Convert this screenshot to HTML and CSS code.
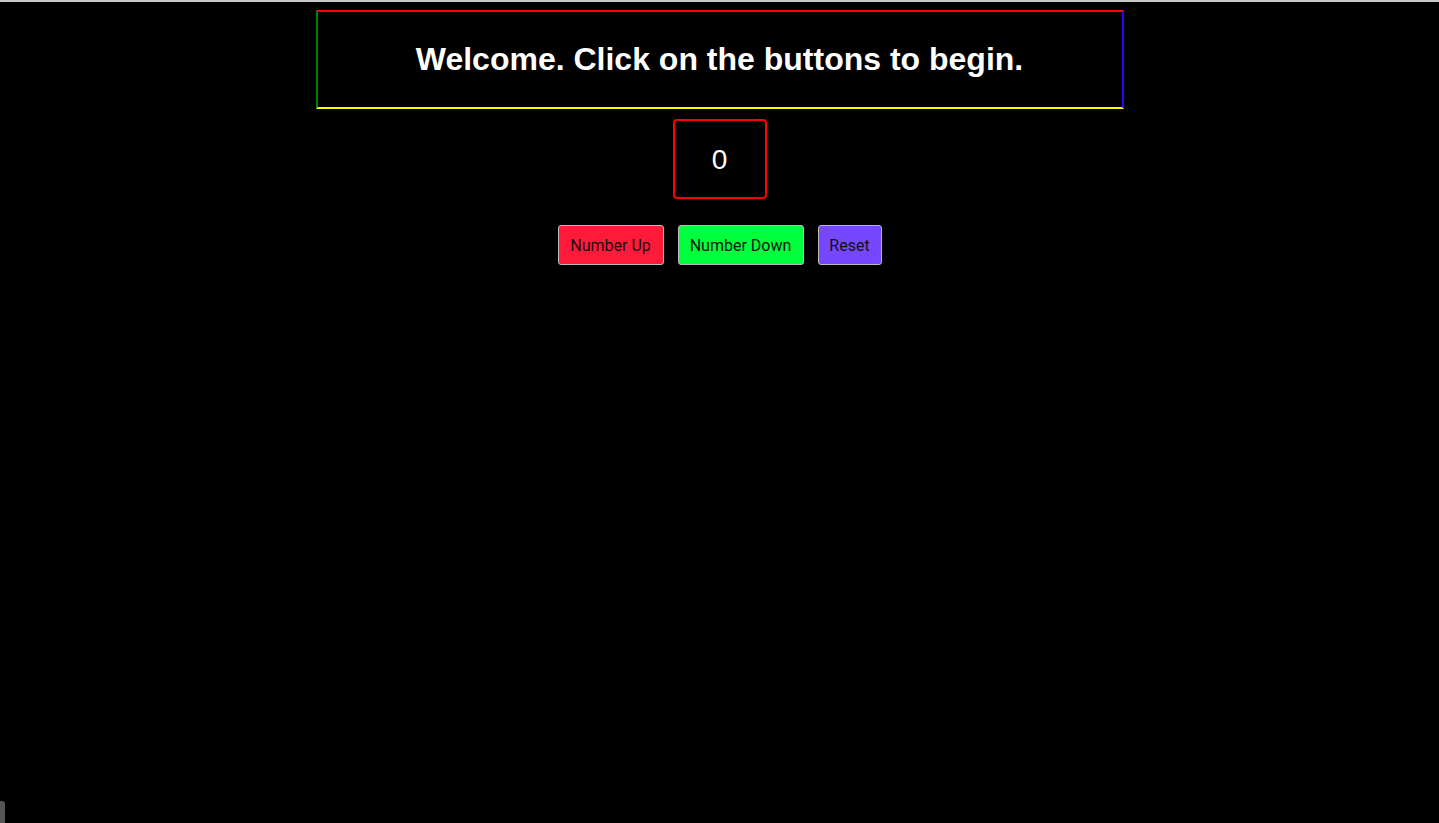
FILE: index.html
```html
<!DOCTYPE html>
<html>
<head>
<meta charset="utf-8">
<link rel="stylesheet" href="styles.css">
</head>
<body>
<div class="topline"></div>
<main class="app">
  <header class="banner">
    <h1 class="title">Welcome. Click on the buttons to begin.</h1>
  </header>
  <div class="counter">0</div>
  <div class="buttons">
    <button class="btn btn-up">Number Up</button>
    <button class="btn btn-down">Number Down</button>
    <button class="btn btn-reset">Reset</button>
  </div>
</main>
<div class="corner"></div>
</body>
</html>
```
FILE: styles.css
```css
html, body {
  margin: 0;
  padding: 0;
  background: #000;
  height: 100%;
}
body {
  font-family: "Liberation Sans", Arial, sans-serif;
  color: #fff;
  overflow: hidden;
}
.topline {
  height: 2px;
  background: #c8c8c8;
}
.app {
  display: flex;
  flex-direction: column;
  align-items: center;
  padding-top: 8px;
}
.banner {
  box-sizing: border-box;
  width: 808px;
  height: 99px;
  border-top: 2px solid #ff0000;
  border-left: 2px solid #008000;
  border-right: 2px solid #3300ff;
  border-bottom: 2px solid #ffff00;
  display: flex;
  align-items: center;
  justify-content: center;
}
.title {
  margin: 0;
  font-size: 32px;
  font-weight: bold;
  color: #fff;
}
.counter {
  box-sizing: border-box;
  margin-top: 10px;
  width: 94px;
  height: 80px;
  border: 2px solid #ff0000;
  border-radius: 4px;
  display: flex;
  align-items: center;
  justify-content: center;
  padding-top: 2px;
  font-family: "Liberation Sans", Arial, sans-serif;
  font-size: 28px;
  color: #fff;
}
.buttons {
  margin-top: 26px;
  display: flex;
  gap: 14px;
}
.btn {
  box-sizing: border-box;
  height: 40px;
  padding: 0 8px;
  border: 1px solid #bbbbbb;
  border-radius: 3px;
  font-family: Roboto, "Noto Sans", sans-serif;
  font-size: 16px;
  color: #111;
  cursor: pointer;
}
.btn-up { background: #ff1a3a; width: 106px; }
.btn-down { background: #00ff3c; width: 126px; }
.btn-reset { background: #7548ff; width: 64px; }
.corner {
  position: absolute;
  left: 0;
  top: 801px;
  width: 5px;
  height: 22px;
  background: #555;
  border-top-right-radius: 3px;
}
```
